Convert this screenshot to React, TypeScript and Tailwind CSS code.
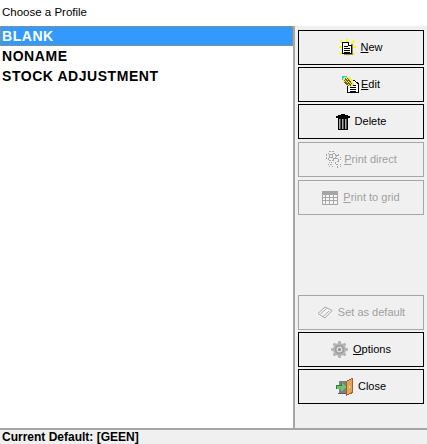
import React from "react";

const font = { fontFamily: '"Liberation Sans", Arial, sans-serif' };

function NewIcon() {
  return (
    <svg width="17" height="17" viewBox="0 0 17 17">
      <path d="M8 0v4M1.500 1.500l3 3M15.500 1.500l-3 3M0 8h3M14 8h3M3 13l-2 2.500M13.500 13l2 2.500M8 14v3" stroke="#ffff00" strokeWidth="2" fill="none" />
      <g shapeRendering="crispEdges">
        <path d="M5 5h9v11H5z" fill="#8a8a8a" />
        <path d="M3.500 3.500h6l3 3v8h-9z" fill="#fffbe0" stroke="#000" />
        <path d="M9.500 3.500v3h3" fill="#fff" stroke="#000" />
        <path d="M5 7h4v1H5zM5 9h6v1H5zM5 11h6v1H5zM5 13h6v1H5z" fill="#000" />
      </g>
    </svg>
  );
}

function EditIcon() {
  return (
    <svg width="17" height="17" viewBox="0 0 17 17" shapeRendering="crispEdges">
      <path d="M5.500 4.500h7l3.500 3v9H5.500z" fill="#fff" stroke="#000" />
      <path d="M8 9h6v1H8zM8 11h6v1H8zM8 13h6v1H8zM8 15h6v1H8z" fill="#000" />
      <path d="M0 0h5v1H2v3H0z" fill="#19d3d3" />
      <path d="M2 1h5l4 4 1 4-3 2-3-1-3-2-2-3V2z" fill="#f3e75a" />
      <path d="M3 2l6 8M5 2l5 6M2 4l5 6M2 6l4 3" stroke="#6a6420" strokeWidth="1" fill="none" />
    </svg>
  );
}

function TrashIcon() {
  return (
    <svg width="14" height="16" viewBox="0 0 14 16" shapeRendering="crispEdges">
      <path d="M5 0h4v1h3v1h2v2H0V2h2V1h3z" fill="#000" />
      <path d="M2 4h10v12H2z" fill="#000" />
      <path d="M3 5h1v10H3zM6 5h1v10H6zM9 5h1v10H9z" fill="#a8a8a8" />
      <path d="M4 5h1v10H4zM7 5h1v10H7zM10 5h1v10h-1z" fill="#555" />
    </svg>
  );
}

function PrintDirectIcon() {
  return (
    <svg width="17" height="17" viewBox="0 0 17 17" shapeRendering="crispEdges" fill="none" stroke="#a6a6a6">
      <path d="M3.500.5h5v2h2v5h-2v2h-5v-2h-2v-5h2z" strokeDasharray="2 1" />
      <path d="M4.500 3.500h3v3h-3z" />
      <path d="M13.500 2.500v2h-2v3h2v3h-3v3h2v3" strokeDasharray="2 1" />
      <path d="M15.500 5.500v3M15.500 12.500v3" strokeDasharray="1 1" />
      <path d="M3.500 11.500h3v2h-3zM4.500 14.500v2M7.500 14.500v2" strokeDasharray="1 1" />
    </svg>
  );
}

function GridIcon() {
  return (
    <svg width="16" height="14" viewBox="0 0 16 14" shapeRendering="crispEdges">
      <path d="M0 0h16v14H0z" fill="#a6a6a6" />
      <path d="M1 4h2v2H1zM4 4h3v2H4zM8 4h3v2H8zM12 4h3v2h-3zM1 7h2v2H1zM4 7h3v2H4zM8 7h3v2H8zM12 7h3v2h-3zM1 10h2v3H1zM4 10h3v3H4zM8 10h3v3H8zM12 10h3v3h-3z" fill="#f6f6f6" />
    </svg>
  );
}

function DefaultIcon() {
  return (
    <svg width="16" height="13" viewBox="0 0 16 13" fill="none" stroke="#a6a6a6">
      <path d="M1 7.500 8 1l7 3.500L8 12z" fill="#f6f6f6" />
      <path d="M3.500 8 9.500 2.500M6 10.500l6-5.500" />
    </svg>
  );
}

function GearIcon() {
  return (
    <svg width="17" height="17" viewBox="0 0 17 17">
      <g fill="#b4b4b4">
        <circle cx="8.500" cy="8.500" r="6.500" />
        <rect x="7" y="0" width="3" height="17" rx="1" />
        <rect x="0" y="7" width="17" height="3" rx="1" />
        <rect x="7" y="0" width="3" height="17" rx="1" transform="rotate(45 8.500 8.500)" />
        <rect x="7" y="0" width="3" height="17" rx="1" transform="rotate(-45 8.500 8.500)" />
      </g>
      <circle cx="8.500" cy="8.500" r="4.500" fill="#9a9a9a" />
      <circle cx="8.500" cy="8.500" r="3" fill="#dedede" />
      <circle cx="8.500" cy="8.500" r="1.500" fill="#8a8a8a" />
    </svg>
  );
}

function CloseIcon() {
  return (
    <svg width="17" height="18" viewBox="0 0 17 18" shapeRendering="crispEdges">
      <path d="M3 3h8v12H3z" fill="#808080" />
      <path d="M2 15h9v1H2z" fill="#5c5c5c" />
      <path d="M0 7h5V5h1l4 4-4 4H5v-2H0z" fill="#6fc26f" />
      <path d="M0 7h5V5h1v3H1v3H0z" fill="#2f7d31" />
      <path d="M10 3l6-3h1v15l-7 3z" fill="#a55f1e" />
      <path d="M11 3.500 16 1v13l-5 2.500z" fill="#e0a566" />
      <path d="M13 8h1v2h-1z" fill="#ffe84a" />
    </svg>
  );
}

function Btn({ icon, disabled, gap, children, className = "" }: { icon: React.ReactNode; disabled?: boolean; gap: string; children: React.ReactNode; className?: string }) {
  return (
    <div
      className={`h-[35px] w-[126px] shrink-0 flex items-center justify-center ${gap} border text-[11px] box-border bg-[#f0f0f0] ${
        disabled ? "border-[#a6a6a6] text-[#a0a0a0]" : "border-black text-black"
      } ${className}`}
    >
      {icon}
      <span>{children}</span>
    </div>
  );
}

export default function App() {
  return (
    <div className="w-[427px] h-[444px] flex flex-col bg-white overflow-hidden" style={font}>
      <div className="h-[26px] shrink-0 pl-[2px] pt-[5px] text-[11.500px] leading-[14px] text-black">Choose a Profile</div>
      <div className="flex flex-1 min-h-0">
        <div className="w-[293px] shrink-0 bg-white text-[14px] font-bold leading-[20px] tracking-[0.55px] text-black">
          <div className="h-[20px] bg-[#3399ff] text-white pl-[2px] outline-1 -outline-offset-1 outline-dotted outline-[#c58a3c]">BLANK</div>
          <div className="h-[20px] pl-[2px]">NONAME</div>
          <div className="h-[20px] pl-[2px]">STOCK ADJUSTMENT</div>
        </div>
        <div className="flex-1 bg-[#f0f0f0] border-l-2 border-[#a6a6a6] pl-[3px] pt-[4px] flex flex-col">
          <div className="flex flex-col gap-[2px]">
            <Btn gap="gap-[4px]" icon={<NewIcon />}><span className="underline">N</span>ew</Btn>
            <Btn gap="gap-[2px]" icon={<EditIcon />}><span className="underline">E</span>dit</Btn>
            <Btn gap="gap-[5px]" icon={<TrashIcon />}>Delete</Btn>
            <Btn gap="gap-[2px]" icon={<PrintDirectIcon />} disabled className="mt-[1px]"><span className="underline">P</span>rint direct</Btn>
            <Btn gap="gap-[5px]" icon={<GridIcon />} disabled className="mt-[1px]"><span className="underline">P</span>rint to grid</Btn>
          </div>
          <div className="flex flex-col gap-[2px] mt-[80px]">
            <Btn gap="gap-[5px]" icon={<DefaultIcon />} disabled>Set as default</Btn>
            <Btn gap="gap-[5px]" icon={<GearIcon />}><span className="underline">O</span>ptions</Btn>
            <Btn gap="gap-[5px]" icon={<CloseIcon />}>Close</Btn>
          </div>
        </div>
      </div>
      <div className="h-[16px] shrink-0 bg-[#f0f0f0] border-t-2 border-[#a6a6a6] pl-[2px] text-[12px] font-bold leading-[15px] text-black">Current Default: [GEEN]</div>
    </div>
  );
}
